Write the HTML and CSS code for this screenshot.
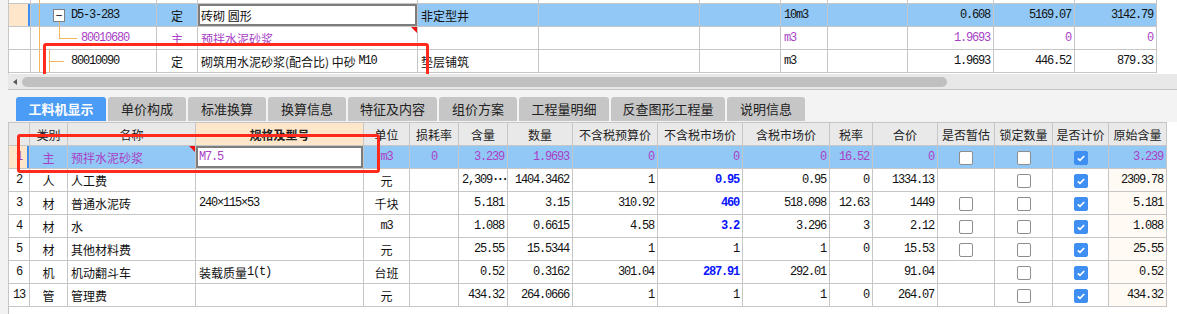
FILE: index.html
```html
<!DOCTYPE html>
<html lang="zh-CN">
<head>
    <meta charset="UTF-8">
    <title>工料机显示</title>
    <link rel="stylesheet" href="styles.css">
</head>
<body>

    <!-- Upper grid: quota items -->
    <div class="upper">
        <table class="grid top-grid">
            <colgroup>
                <col style="width:22px"><col style="width:126px"><col style="width:41px"><col style="width:220px">
                <col style="width:121px"><col style="width:161px"><col style="width:81px"><col style="width:47px">
                <col style="width:80px"><col style="width:86px"><col style="width:81px"><col style="width:82px">
            </colgroup>
            <tr>
                <td></td><td class="tree t0"></td><td></td><td></td><td></td><td></td>
                <td></td><td></td><td></td><td></td><td></td><td></td>
            </tr>
            <tr class="sel">
                <td class="rowhead"></td>
                <td class="tree t1"><span class="fold">−</span><span class="mono">D5-3-283</span></td>
                <td class="c">定</td>
                <td class="edit">砖砌 圆形</td>
                <td>非定型井</td>
                <td></td>
                <td></td>
                <td class="mono">10m3</td>
                <td></td>
                <td class="num">0.608</td>
                <td class="num">5169.07</td>
                <td class="num">3142.79</td>
            </tr>
            <tr class="purple">
                <td></td>
                <td class="tree t2"><span class="mono code2">80010680</span></td>
                <td class="c">主</td>
                <td class="flag">预拌水泥砂浆</td>
                <td></td>
                <td></td>
                <td></td>
                <td class="mono">m3</td>
                <td></td>
                <td class="num">1.9693</td>
                <td class="num">0</td>
                <td class="num">0</td>
            </tr>
            <tr>
                <td></td>
                <td class="tree t3"><span class="mono">80010090</span></td>
                <td class="c">定</td>
                <td>砌筑用水泥砂浆(配合比) 中砂 <span class="mono">M10</span></td>
                <td>垫层铺筑</td>
                <td></td>
                <td></td>
                <td class="mono">m3</td>
                <td></td>
                <td class="num">1.9693</td>
                <td class="num">446.52</td>
                <td class="num">879.33</td>
            </tr>
        </table>
        <div class="mark mark-top"></div>
    </div>

    <div class="hscroll">
        <span class="arrow"></span>
        <div class="thumb"></div>
    </div>

    <!-- Detail tabs -->
    <div class="tabs">
        <div class="tab active" style="width:90px">工料机显示</div>
        <div class="tab" style="width:78px">单价构成</div>
        <div class="tab" style="width:78px">标准换算</div>
        <div class="tab" style="width:78px">换算信息</div>
        <div class="tab" style="width:89px">特征及内容</div>
        <div class="tab" style="width:78px">组价方案</div>
        <div class="tab" style="width:90px">工程量明细</div>
        <div class="tab" style="width:114px">反查图形工程量</div>
        <div class="tab" style="width:78px">说明信息</div>
    </div>

    <!-- Lower grid: labour / material / machine -->
    <div class="lower">
        <table class="grid bottom-grid">
            <colgroup>
                <col style="width:21px"><col style="width:38px"><col style="width:128px"><col style="width:168px">
                <col style="width:46px"><col style="width:49px"><col style="width:49px"><col style="width:65px">
                <col style="width:85px"><col style="width:85px"><col style="width:87px"><col style="width:43px">
                <col style="width:65px"><col style="width:57px"><col style="width:58px"><col style="width:56px">
                <col style="width:58px">
            </colgroup>
            <tr class="head">
                <th></th><th>类别</th><th>名称</th><th class="spec">规格及型号</th><th>单位</th><th>损耗率</th>
                <th>含量</th><th>数量</th><th>不含税预算价</th><th>不含税市场价</th><th>含税市场价</th><th>税率</th>
                <th>合价</th><th>是否暂估</th><th>锁定数量</th><th>是否计价</th><th>原始含量</th>
            </tr>
            <tr class="sel purple">
                <td class="rowhead c mono">1</td>
                <td class="c">主</td>
                <td class="flag">预拌水泥砂浆</td>
                <td class="edit mono">M7.5</td>
                <td class="c mono">m3</td>
                <td class="c mono">0</td>
                <td class="num">3.239</td>
                <td class="num">1.9693</td>
                <td class="num">0</td>
                <td class="num">0</td>
                <td class="num">0</td>
                <td class="num">16.52</td>
                <td class="num">0</td>
                <td class="c"><span class="box"></span></td>
                <td class="c"><span class="box"></span></td>
                <td class="c"><span class="box on"><svg viewBox="0 0 13 13"><path d="M3 6.8 L5.4 9.1 L10 4.3"/></svg></span></td>
                <td class="num">3.239</td>
            </tr>
            <tr>
                <td class="c mono">2</td><td class="c">人</td><td>人工费</td><td></td><td class="c">元</td><td></td>
                <td class="num tight">2,309<span class="dots">···</span></td><td class="num">1404.3462</td><td class="num">1</td><td class="num blue">0.95</td>
                <td class="num">0.95</td><td class="num">0</td><td class="num">1334.13</td>
                <td></td>
                <td class="c"><span class="box"></span></td>
                <td class="c"><span class="box on"><svg viewBox="0 0 13 13"><path d="M3 6.8 L5.4 9.1 L10 4.3"/></svg></span></td>
                <td class="num orig">2309.78</td>
            </tr>
            <tr>
                <td class="c mono">3</td><td class="c">材</td><td>普通水泥砖</td><td class="mono">240×115×53</td><td class="c">千块</td><td></td>
                <td class="num">5.181</td><td class="num">3.15</td><td class="num">310.92</td><td class="num blue">460</td>
                <td class="num">518.098</td><td class="num">12.63</td><td class="num">1449</td>
                <td class="c"><span class="box"></span></td>
                <td class="c"><span class="box"></span></td>
                <td class="c"><span class="box on"><svg viewBox="0 0 13 13"><path d="M3 6.8 L5.4 9.1 L10 4.3"/></svg></span></td>
                <td class="num orig">5.181</td>
            </tr>
            <tr>
                <td class="c mono">4</td><td class="c">材</td><td>水</td><td></td><td class="c mono">m3</td><td></td>
                <td class="num">1.088</td><td class="num">0.6615</td><td class="num">4.58</td><td class="num blue">3.2</td>
                <td class="num">3.296</td><td class="num">3</td><td class="num">2.12</td>
                <td class="c"><span class="box"></span></td>
                <td class="c"><span class="box"></span></td>
                <td class="c"><span class="box on"><svg viewBox="0 0 13 13"><path d="M3 6.8 L5.4 9.1 L10 4.3"/></svg></span></td>
                <td class="num orig">1.088</td>
            </tr>
            <tr>
                <td class="c mono">5</td><td class="c">材</td><td>其他材料费</td><td></td><td class="c">元</td><td></td>
                <td class="num">25.55</td><td class="num">15.5344</td><td class="num">1</td><td class="num">1</td>
                <td class="num">1</td><td class="num">0</td><td class="num">15.53</td>
                <td class="c"><span class="box"></span></td>
                <td class="c"><span class="box"></span></td>
                <td class="c"><span class="box on"><svg viewBox="0 0 13 13"><path d="M3 6.8 L5.4 9.1 L10 4.3"/></svg></span></td>
                <td class="num orig">25.55</td>
            </tr>
            <tr>
                <td class="c mono">6</td><td class="c">机</td><td>机动翻斗车</td><td>装载质量<span class="mono">1(t)</span></td><td class="c">台班</td><td></td>
                <td class="num">0.52</td><td class="num">0.3162</td><td class="num">301.04</td><td class="num blue">287.91</td>
                <td class="num">292.01</td><td class="num"></td><td class="num">91.04</td>
                <td></td>
                <td class="c"><span class="box"></span></td>
                <td class="c"><span class="box on"><svg viewBox="0 0 13 13"><path d="M3 6.8 L5.4 9.1 L10 4.3"/></svg></span></td>
                <td class="num orig">0.52</td>
            </tr>
            <tr>
                <td class="c mono">13</td><td class="c">管</td><td>管理费</td><td></td><td class="c">元</td><td></td>
                <td class="num">434.32</td><td class="num">264.0666</td><td class="num">1</td><td class="num">1</td>
                <td class="num">1</td><td class="num">0</td><td class="num">264.07</td>
                <td></td>
                <td class="c"><span class="box"></span></td>
                <td class="c"><span class="box on"><svg viewBox="0 0 13 13"><path d="M3 6.8 L5.4 9.1 L10 4.3"/></svg></span></td>
                <td class="num orig">434.32</td>
            </tr>
        </table>
        <div class="mark mark-bottom"></div>
    </div>

</body>
</html>
```

FILE: styles.css
```css
/* General Reset */
* {
    margin: 0;
    padding: 0;
    box-sizing: border-box;
}

body {
    width: 1177px;
    height: 314px;
    overflow: hidden;
    background-color: #f2f2f2;
    color: #111;
    font-family: "Noto Sans CJK SC", sans-serif;
    font-size: 12px;
}

/* Shared grid styling */
.grid {
    border-collapse: collapse;
    table-layout: fixed;
}

.grid td,
.grid th {
    height: 23px;
    padding: 0 3px;
    border: 1px solid #c6c6c6;
    line-height: 21px;
    white-space: nowrap;
    overflow: hidden;
    text-align: left;
    font-weight: normal;
}

/* keep mixed-font lines from growing the row */
.grid td span {
    vertical-align: top;
    line-height: 21px;
}

.grid .c {
    text-align: center;
}

.mono,
.num {
    font-family: "Liberation Mono", "Noto Sans CJK SC", monospace;
    font-size: 12px;
    letter-spacing: -1.2px;
}

.grid .num {
    text-align: right;
    padding-right: 3px;
}

.grid .tight {
    padding-right: 1px;
}

.grid .dots {
    letter-spacing: -2.4px;
    font-weight: bold;
}

.sel td {
    background-color: #92c8f5;
}

.sel .rowhead {
    background-color: #fde6ca;
    box-shadow: inset -2px 0 0 #3d8ef0;
}

.purple td {
    color: #a93fc6;
}

.grid .blue {
    color: #0a14ff;
    font-weight: bold;
}

/* In-place editor cell */
.sel .edit {
    background-color: #fff;
    box-shadow: inset 0 0 0 2px #7d7d7d;
}

/* Red comment corner */
.flag {
    position: relative;
}

.flag::after {
    content: "";
    position: absolute;
    top: 0;
    right: 0;
    border-top: 6px solid #f01010;
    border-left: 6px solid transparent;
}

/* Upper grid */
.upper {
    position: relative;
    height: 74px;
    margin-left: 8px;
    overflow: hidden;
    background-color: #fff;
    border-left: 1px solid #c6c6c6;
}

.top-grid {
    width: 1148px;
    margin-top: -20px;
    margin-left: -1px;
}

/* Tree connector lines */
.grid .tree {
    padding-left: 40px;
    background-repeat: no-repeat;
}

.t0 {
    background-image: linear-gradient(#f4b65c, #f4b65c);
    background-position: 8px 0;
    background-size: 1px 100%;
}

.grid .t1 {
    background-image: linear-gradient(#f4b65c, #f4b65c), linear-gradient(#f4b65c, #f4b65c);
    background-position: 8px 0, 28px 17px;
    background-size: 1px 100%, 1px 6px;
    padding-left: 22px;
}

.t2 {
    background-image: linear-gradient(#f4b65c, #f4b65c), linear-gradient(#f4b65c, #f4b65c), linear-gradient(#f4b65c, #f4b65c);
    background-position: 8px 0, 28px 0, 28px 11px;
    background-size: 1px 100%, 1px 11px, 18px 1px;
}

.t3 {
    background-image: linear-gradient(#f4b65c, #f4b65c), linear-gradient(#f4b65c, #f4b65c), linear-gradient(#f4b65c, #f4b65c);
    background-position: 8px 0, 18px 0, 18px 11px;
    background-size: 1px 100%, 1px 100%, 15px 1px;
}

.code2 {
    margin-left: 10px;
}

.grid .fold {
    display: inline-block;
    width: 12px;
    height: 13px;
    margin: 4px 6px 0 0;
    border: 1px solid #808080;
    background-color: #fff;
    line-height: 10px;
    text-align: center;
    font-size: 12px;
}

/* Horizontal scrollbar */
.hscroll {
    position: relative;
    height: 16px;
    margin-left: 8px;
    padding: 3px 0 0 14px;
    background-color: #e8e8e8;
    border-bottom: 1px solid #c4c4c4;
}

.arrow {
    position: absolute;
    left: 5px;
    top: 5px;
    border-right: 4px solid #5a5a5a;
    border-top: 3px solid transparent;
    border-bottom: 3px solid transparent;
}

.thumb {
    width: 925px;
    height: 10px;
    border-radius: 5px;
    background-color: #c0c0c0;
}

/* Tabs */
.tabs {
    display: flex;
    gap: 2px;
    height: 31px;
    padding: 7px 0 0 16px;
    background-color: #f3f3f3;
}

.tab {
    height: 24px;
    border-radius: 3px 3px 0 0;
    background-color: #c6c6c6;
    color: #222;
    font-size: 13px;
    line-height: 24px;
    text-align: center;
}

.tab.active {
    background-color: #4b9cf4;
    color: #fff;
    font-weight: bold;
}

/* Lower grid */
.lower {
    position: relative;
    height: 193px;
    margin-top: 1px;
    margin-left: 8px;
    background-color: #fff;
    border-left: 1px solid #c0c0c0;
}

.bottom-grid {
    width: 1158px;
    margin-left: -1px;
}

.head th {
    background-color: #e9e9e9;
    color: #222;
    text-align: center;
}

.grid .spec {
    background-color: #fde6ca;
    font-weight: bold;
}

.orig {
    background-color: #fffaf4;
}

/* Checkboxes */
.grid .box {
    display: inline-block;
    width: 14px;
    height: 14px;
    margin-top: 4px;
    border: 1px solid #8e8e8e;
    border-radius: 2px;
    background-color: #fff;
}

.grid .box.on {
    border-color: #3f8ff2;
    background-color: #3f8ff2;
}

.box svg {
    display: block;
    width: 12px;
    height: 12px;
}

.box path {
    fill: none;
    stroke: #fff;
    stroke-width: 1.8;
}

/* Red annotation rectangles */
.mark {
    position: absolute;
    border: 3px solid #ff2a1c;
    border-radius: 3px;
    pointer-events: none;
}

.mark-top {
    left: 34px;
    top: 43px;
    width: 386px;
    height: 39px;
}

.mark-bottom {
    left: 8px;
    top: 12px;
    width: 363px;
    height: 39px;
}
```
